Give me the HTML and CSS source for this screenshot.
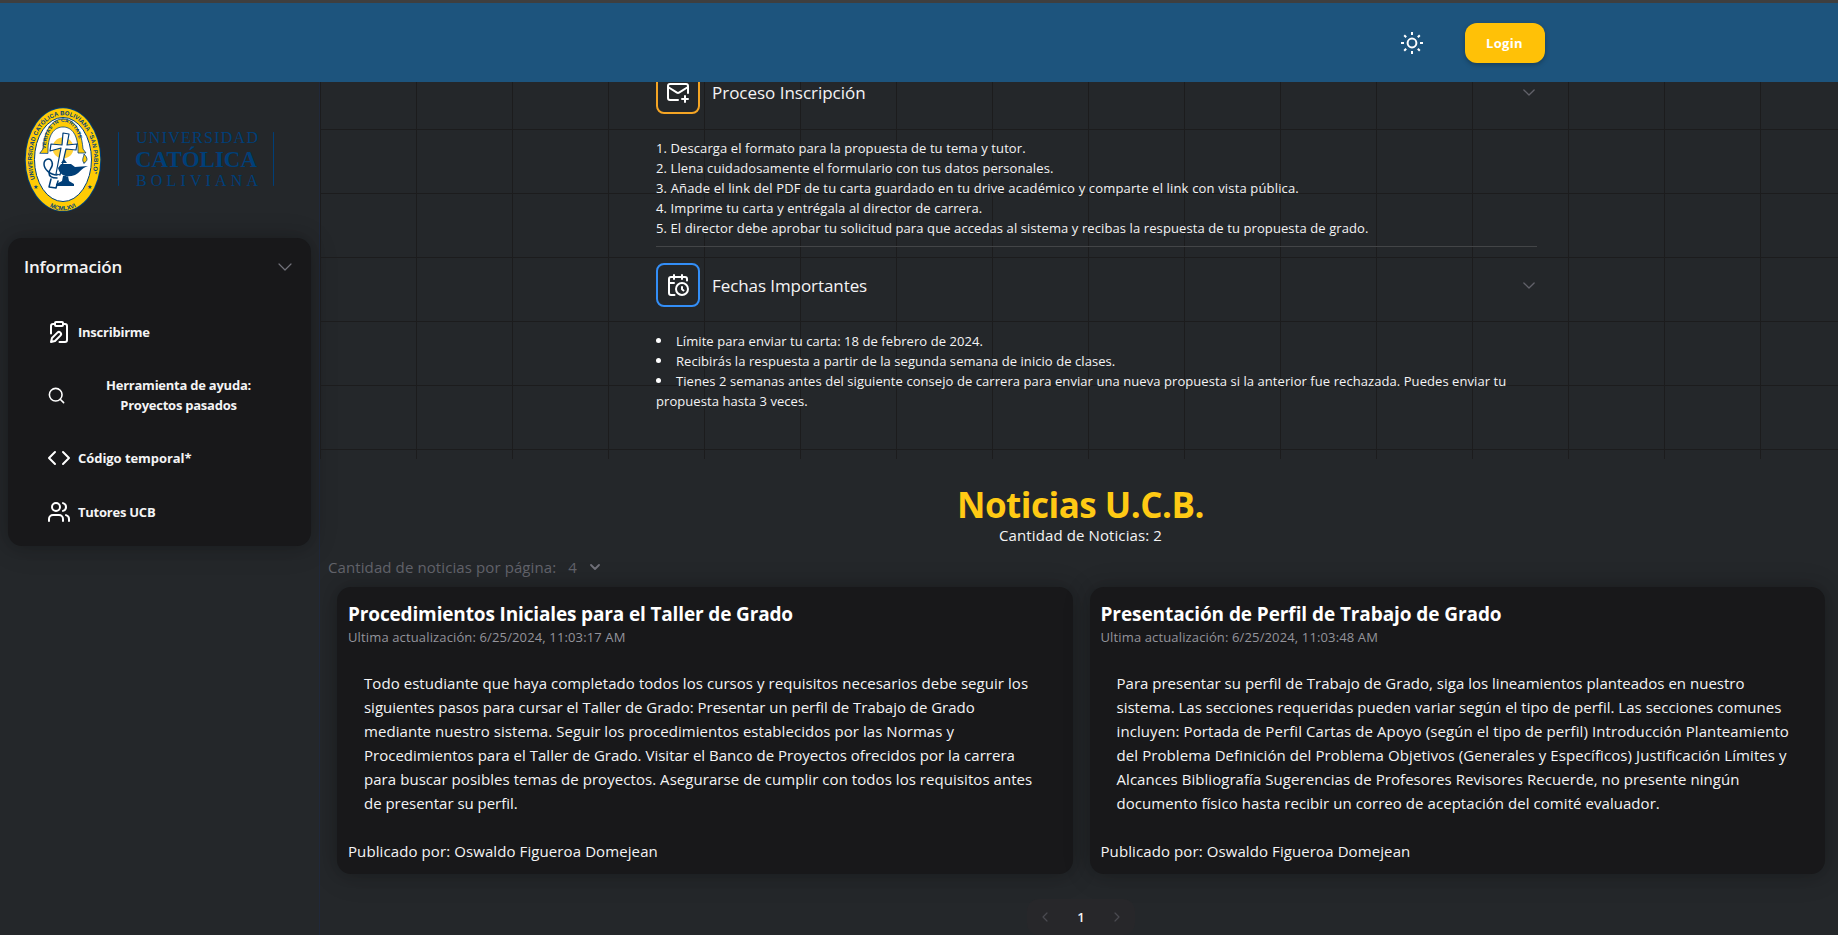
FILE: index.html
```html
<!DOCTYPE html>
<html lang="es">
<head>
<meta charset="utf-8">
<title>Taller de Grado</title>
<link rel="stylesheet" href="styles.css">
</head>
<body>
<header class="topbar">
  <svg class="sun" viewBox="0 0 24 24"><circle cx="12" cy="12" r="4.400"/><path d="M12 1v3M12 20v3M1 12h3M20 12h3M4.200 4.200l2 2M17.800 17.800l2 2M4.200 19.800l2-2M17.800 6.200l2-2"/></svg>
  <button class="login">Login</button>
</header>
<div class="layout">
  <aside class="sidebar">
    <svg class="logo" viewBox="0 0 320 156">
      <ellipse cx="63" cy="77.500" rx="38.300" ry="52.300" fill="#003f78"/>
      <ellipse cx="63" cy="77.500" rx="37.300" ry="51.300" fill="#ffcb05"/>
      <ellipse cx="63" cy="77.500" rx="28.500" ry="42" fill="#fff" stroke="#003f78" stroke-width="1"/>
      <circle cx="63" cy="66" r="7" fill="none" stroke="#ffd23a" stroke-width="7" stroke-dasharray="1.200 .8"/>
      <path d="M40 71l3-4c2-24 12-30 20-30s18 6 20 30l3 4h-8l0-5c-1-16-8-21-15-21s-14 5-15 21v5z" fill="#ffcb05" stroke="#003f78" stroke-width=".8"/>
      <path d="M63 51l6 1-2 11 10-1-1 6-10-1-6 26-4-1 5-26-11 3 1-7 11 1z" fill="#fff" stroke="#003f78" stroke-width="1.200"/>
      <path d="M58 86c2 8 9 10 17 7 5-2 6-7 13-9l-13 1-4-3H61zM63 94h5l1 5 5 3v2H56v-2l6-3zM61 81l3-4 3 4z" fill="#003f78"/>
      <path d="M57 93c-7 0-13-6-13-11s6-7 8-2-3 7-3 11 3 5 8 5M51 97l-2 8 7 1 2-7" fill="none" stroke="#003f78" stroke-width="1.500"/>
      <path d="M84 81c-3-3 0-6 0-9 4 4 4 7 0 9z" fill="#ffcb05" stroke="#003f78" stroke-width=".8"/>
      <path id="arc" d="M35.100 97A31 44.500 0 1 1 90.900 97" fill="none"/>
      <path id="arc2" d="M45.500 66C47 46 56 39 63 39s16 7 17.500 27" fill="none" transform="translate(0 1)"/>
      <path id="arc3" d="M39 114C50 133 76 133 87 114" fill="none"/>
      <text class="crest-text"><textPath href="#arc" textLength="153">UNIVERSIDAD CATÓLICA BOLIVIANA "SAN PABLO"</textPath></text>
      <text class="crest-text crest-small"><textPath href="#arc2" textLength="60">VERITAS IN CARITATE</textPath></text>
      <text class="crest-text"><textPath href="#arc3" startOffset="50%" text-anchor="middle">MCMLXVI</textPath></text>
      <text class="crest-star" x="33" y="107">★</text><text class="crest-star" x="87" y="107">★</text>
      <path d="M118.500 50.500v53M273.500 50.500v53" stroke="#003f78"/>
      <text class="brand" x="136" y="61.300" font-size="16" textLength="122">UNIVERSIDAD</text>
      <text class="brand brand-strong" x="135" y="85" font-size="23" textLength="122">CATÓLICA</text>
      <text class="brand" x="136" y="103.500" font-size="16" textLength="122">BOLIVIANA</text>
    </svg>
    <section class="menu">
      <div class="menu-head"><span>Información</span><svg class="chev" viewBox="0 0 14 8"><path d="M1 1l6 6 6-6"/></svg></div>
      <ul>
        <li><svg class="ico" viewBox="0 0 24 24"><rect width="8" height="4" x="8" y="2" rx="1"/><path d="M10.400 12.600a2 2 0 0 1 3 3L8 21l-4 1 1-4Z"/><path d="M16 4h2a2 2 0 0 1 2 2v14a2 2 0 0 1-2 2h-5.500"/><path d="M4 13.500V6a2 2 0 0 1 2-2h2"/></svg><span>Inscribirme</span></li>
        <li class="two"><svg class="ico small" viewBox="0 0 24 24"><circle cx="11" cy="11" r="8"/><path d="m21 21-4.300-4.300"/></svg><div>Herramienta de ayuda:<br>Proyectos pasados</div></li>
        <li><svg class="ico" viewBox="0 0 24 24"><path d="m16 18 6-6-6-6M8 6l-6 6 6 6"/></svg><span class="code">Código temporal*</span></li>
        <li><svg class="ico" viewBox="0 0 24 24"><path d="M16 21v-2a4 4 0 0 0-4-4H6a4 4 0 0 0-4 4v2"/><circle cx="9" cy="7" r="4"/><path d="M22 21v-2a4 4 0 0 0-3-3.870M16 3.130a4 4 0 0 1 0 7.750"/></svg><span>Tutores UCB</span></li>
      </ul>
    </section>
  </aside>
  <main>
    <section class="hero">
      <div class="accordion">
        <article class="entry first">
          <h2><i class="badge amber"><svg class="ico" viewBox="0 0 24 24"><path d="M22 13V6a2 2 0 0 0-2-2H4a2 2 0 0 0-2 2v12c0 1.100.9 2 2 2h8"/><path d="m22 7-8.970 5.700a1.940 1.940 0 0 1-2.060 0L2 7M19 16v6M16 19h6"/></svg></i><span>Proceso Inscripción</span><svg class="chev" viewBox="0 0 14 8"><path d="M1 1l6 6 6-6"/></svg></h2>
          <p>1. Descarga el formato para la propuesta de tu tema y tutor.<br>2. Llena cuidadosamente el formulario con tus datos personales.<br><span class="loose">3. Añade el link del PDF de tu carta guardado en tu drive académico y comparte el link con vista pública.</span><br>4. Imprime tu carta y entrégala al director de carrera.<br>5. El director debe aprobar tu solicitud para que accedas al sistema y recibas la respuesta de tu propuesta de grado.</p>
        </article>
        <article class="entry second">
          <h2><i class="badge blue"><svg class="ico" viewBox="0 0 24 24"><path d="M21 7.500V6a2 2 0 0 0-2-2H5a2 2 0 0 0-2 2v14a2 2 0 0 0 2 2h3.500M16 2v4M8 2v4M3 10h5M17.500 17.500 16 16.300V14"/><circle cx="16" cy="16" r="6"/></svg></i><span>Fechas Importantes</span><svg class="chev" viewBox="0 0 14 8"><path d="M1 1l6 6 6-6"/></svg></h2>
          <p><b class="dot"></b>Límite para enviar tu carta: 18 de febrero de 2024.<br><b class="dot"></b>Recibirás la respuesta a partir de la segunda semana de inicio de clases.<br><b class="dot"></b>Tienes 2 semanas antes del siguiente consejo de carrera para enviar una nueva propuesta si la anterior fue rechazada. Puedes enviar tu<br>propuesta hasta 3 veces.</p>
        </article>
      </div>
    </section>
    <section class="news">
      <h1>Noticias U.C.B.</h1>
      <p class="count">Cantidad de Noticias: 2</p>
      <div class="per-page"><span>Cantidad de noticias por página:</span><span class="num">4</span><svg viewBox="0 0 10 7"><path d="M1 1l4 4 4-4"/></svg></div>
      <div class="cards">
        <article class="card">
          <h3>Procedimientos Iniciales para el Taller de Grado</h3>
          <small>Ultima actualización: 6/25/2024, 11:03:17 AM</small>
          <p>Todo estudiante que haya completado todos los cursos y requisitos necesarios debe seguir los<br><span class="tight">siguientes pasos para cursar el Taller de Grado: Presentar un perfil de Trabajo de Grado</span><br>mediante nuestro sistema. Seguir los procedimientos establecidos por las Normas y<br><span class="snug">Procedimientos para el Taller de Grado. Visitar el Banco de Proyectos ofrecidos por la carrera</span><br>para buscar posibles temas de proyectos. Asegurarse de cumplir con todos los requisitos antes<br><span class="tight">de presentar su perfil.</span></p>
          <footer>Publicado por: Oswaldo Figueroa Domejean</footer>
        </article>
        <article class="card">
          <h3 class="wide">Presentación de Perfil de Trabajo de Grado</h3>
          <small>Ultima actualización: 6/25/2024, 11:03:48 AM</small>
          <p><span class="snug">Para presentar su perfil de Trabajo de Grado, siga los lineamientos planteados en nuestro</span><br><span class="snug">sistema. Las secciones requeridas pueden variar según el tipo de perfil. Las secciones comunes</span><br><span class="loose">incluyen: Portada de Perfil Cartas de Apoyo (según el tipo de perfil) Introducción Planteamiento</span><br><span class="loose">del Problema Definición del Problema Objetivos (Generales y Específicos) Justificación Límites y</span><br>Alcances Bibliografía Sugerencias de Profesores Revisores Recuerde, no presente ningún<br>documento físico hasta recibir un correo de aceptación del comité evaluador.</p>
          <footer>Publicado por: Oswaldo Figueroa Domejean</footer>
        </article>
      </div>
      <nav class="pager"><svg viewBox="0 0 6 10"><path d="M5 1L1 5l4 4"/></svg><span>1</span><svg viewBox="0 0 6 10"><path d="M1 1l4 4-4 4"/></svg></nav>
    </section>
  </main>
</div>
</body>
</html>
```
FILE: styles.css
```css
* { box-sizing: border-box; }
body {
  margin: 0; height: 935px; overflow: hidden;
  background: #24272a; color: #f4f4f5;
  font-family: "Open Sans", "Noto Sans", sans-serif; font-size: 15px; line-height: 24px;
  display: flex; flex-direction: column;
}
h1, h2, h3, p, ul { margin: 0; padding: 0; list-style: none; white-space: nowrap; }
span { white-space: nowrap; }
svg { fill: none; stroke: currentColor; stroke-linecap: round; stroke-linejoin: round; flex: none; }

.topbar {
  height: 82px; flex: none; background: #1d547d; border-top: 3px solid #3f3f3f;
  display: flex; align-items: center; justify-content: flex-end; gap: 41px; padding-right: 293px;
}
.sun { width: 24px; height: 24px; stroke-width: 2; stroke-linecap: butt; color: #fff; }
.login {
  width: 80px; height: 40px; border: 0; border-radius: 12px; background: #ffc107; color: #fff;
  font: 700 13px "Open Sans", sans-serif; letter-spacing: .35px; padding: 0 1px 0 0; box-shadow: 0 2px 5px #0004;
}
.layout { display: flex; flex: 1; min-height: 0; }
.sidebar { width: 320px; flex: none; border-right: 1px solid #20283a; }
.logo { display: block; width: 320px; height: 156px; stroke: none; }
.crest-text { font: 700 6px "Liberation Sans", sans-serif; fill: #003f78; stroke: none; }
.crest-small { font-size: 5px; }
.crest-star { font: 6px "DejaVu Sans"; fill: #003f78; }
.brand { font-family: "Liberation Serif", serif; fill: #003f78; }
.brand-strong { font-weight: 700; }

.menu {
  margin: 0 8px 0 8px; height: 308px; border-radius: 14px; background: #18181a;
  box-shadow: 0 0 15px #0003, 0 2px 30px #0002; padding: 14px 19px 0 16px;
}
.menu-head { display: flex; justify-content: space-between; align-items: center; height: 30px; font-size: 17px; font-weight: 600; letter-spacing: -.2px; }
.chev { width: 14px; height: 8px; color: #71717a; stroke-width: 1.200; }
.menu ul { padding: 23px 0 0 23px; font-size: 13px; font-weight: 700; line-height: 20px; letter-spacing: -.24px; }
.menu li { display: flex; align-items: center; height: 54px; gap: 7px; }
.menu li.two { height: 72px; }
.menu li.two div { flex: 1; text-align: center; padding-right: 8px; }
.menu .code { letter-spacing: -.06px; }
.ico { width: 24px; height: 24px; stroke-width: 2; color: #fff; }
.ico.small { width: 19px; height: 19px; }

main { flex: 1; min-width: 0; overflow: hidden; }
.hero {
  height: 377px; display: flex; justify-content: center; overflow: hidden;
  background-image: linear-gradient(#1c1c1d 1px, transparent 1px), linear-gradient(90deg, #1c1c1d 1px, transparent 1px);
  background-size: 96px 64px; background-position: 0 47px;
}
.accordion { width: 881px; margin-left: 35px; margin-top: -12px; }
.entry h2 { display: flex; align-items: center; height: 44px; gap: 12px; font-size: 17px; font-weight: 400; letter-spacing: -.08px; }
.entry h2 span { padding-top: 1px; }
.entry.first h2 span { letter-spacing: -.02px; }
.entry h2 .chev { margin: 0 2px 0 auto; width: 12px; height: 7px; color: #62626a; stroke-width: 1.500; }
.entry p { font-size: 13px; line-height: 20px; padding-top: 24px; letter-spacing: .1px; }
.entry p .loose { letter-spacing: .16px; }
.entry.second p { letter-spacing: .067px; }
.entry.first { border-bottom: 1px solid #434547; height: 177px; margin-bottom: 16px; }
.badge { width: 44px; height: 44px; border: 2px solid #f5a524; border-radius: 8px; display: grid; place-items: center; }
.badge.blue { border-color: #338ef7; }
.dot { display: inline-block; width: 5px; height: 5px; border-radius: 50%; background: #fff; margin: 0 15px 3px 0; }

.news { padding-top: 26px; }
.news h1 { text-align: center; font-size: 35px; line-height: 38px; font-weight: 700; color: #ffca14; padding: 1px 0 0 3px; letter-spacing: -.5px; }
.count { text-align: center; margin-top: -1px; padding-left: 3px; letter-spacing: .107px; }
.per-page { height: 28px; margin-top: 6px; padding-left: 8px; display: flex; align-items: center; color: #62636a; letter-spacing: .1px; }
.per-page .num { margin: 0 13px 0 12px; }
.per-page svg { width: 10px; height: 7px; stroke-width: 1.800; color: #71717a; }
.cards { display: flex; gap: 17px; padding: 6px 13px 0 17px; }
.card {
  flex: 1; height: 287px; border-radius: 14px; background: #18181a; padding: 14px 12px 0 11px;
  box-shadow: 0 0 15px #0003, 0 2px 30px #0002; display: flex; flex-direction: column;
}
.card h3 { font-size: 19px; line-height: 26px; font-weight: 700; color: #fff; letter-spacing: -.145px; }
.card h3.wide { letter-spacing: -.08px; }
.card small { font-size: 13px; line-height: 20px; color: #94949c; letter-spacing: .135px; }
.card p { padding: 24px 16px 0; letter-spacing: .055px; }
.card .tight { letter-spacing: -.025px; }
.card .snug { letter-spacing: .012px; }
.card .loose { letter-spacing: .09px; }
.card footer { padding-top: 24px; letter-spacing: .095px; }
.pager {
  width: 108px; height: 36px; margin: 25px auto 0; border-radius: 12px; background: #27272a;
  display: flex; justify-content: space-between; align-items: center; padding: 0 15px; font-size: 13px; font-weight: 600;
  position: relative; left: 2px;
}
.pager svg { width: 6px; height: 10px; color: #4a4a50; stroke-width: 1.200; }
```
